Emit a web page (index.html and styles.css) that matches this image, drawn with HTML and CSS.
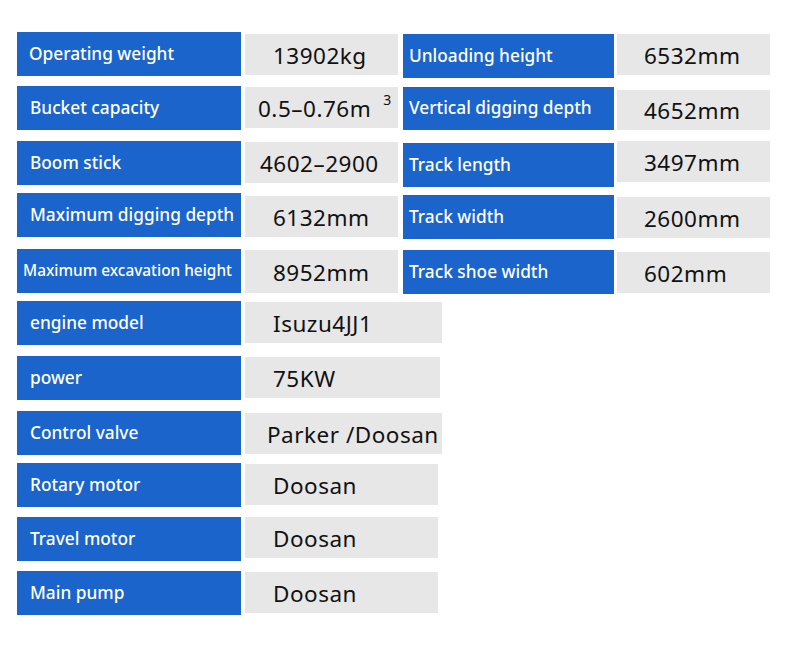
FILE: index.html
```html
<!DOCTYPE html>
<html lang="en">
<head>
<meta charset="utf-8">
<title>Specifications</title>
<link rel="stylesheet" href="styles.css">
</head>
<body>
<div class="sheet">
  <div class="row r1">
    <div class="lab l-ow">Operating weight</div>
    <div class="val v-c1 o2">13902kg</div>
    <div class="lab lab2 o2">Unloading height</div>
    <div class="val val2 o2">6532mm</div>
  </div>
  <div class="row r2">
    <div class="lab">Bucket capacity</div>
    <div class="val v-c1 v-bucket o1">0.5–0.76m<sup class="sup">3</sup></div>
    <div class="lab lab2 lab2-short o1">Vertical digging depth</div>
    <div class="val val2 o4 short">4652mm</div>
  </div>
  <div class="row r3">
    <div class="lab">Boom stick</div>
    <div class="val v-c1 v-boom o1">4602–2900</div>
    <div class="lab lab2 o2">Track length</div>
    <div class="val val2">3497mm</div>
  </div>
  <div class="row r4">
    <div class="lab">Maximum digging depth</div>
    <div class="val v-c1 o3">6132mm</div>
    <div class="lab lab2 o2">Track width</div>
    <div class="val val2 o4">2600mm</div>
  </div>
  <div class="row r5">
    <div class="lab lab-small">Maximum excavation height</div>
    <div class="val v-c1 o1 tall">8952mm</div>
    <div class="lab lab2 o1">Track shoe width</div>
    <div class="val val2 o3">602mm</div>
  </div>
  <div class="row r6">
    <div class="lab">engine model</div>
    <div class="val v-wide o1">Isuzu4JJ1</div>
  </div>
  <div class="row r7">
    <div class="lab">power</div>
    <div class="val v-mid o1">75KW</div>
  </div>
  <div class="row r8">
    <div class="lab">Control valve</div>
    <div class="val v-wide v-parker o2">Parker /Doosan</div>
  </div>
  <div class="row r9">
    <div class="lab">Rotary motor</div>
    <div class="val v-narrow o1">Doosan</div>
  </div>
  <div class="row r10">
    <div class="lab">Travel motor</div>
    <div class="val v-narrow">Doosan</div>
  </div>
  <div class="row r11">
    <div class="lab">Main pump</div>
    <div class="val v-narrow o1">Doosan</div>
  </div>
</div>
</body>
</html>
```

FILE: styles.css
```css
html, body {
  margin: 0;
  padding: 0;
  background: #ffffff;
}

body {
  width: 790px;
  height: 652px;
  overflow: hidden;
  font-family: "Noto Sans", "Open Sans", sans-serif;
}

.sheet {
  padding: 32px 0 0 17px;
}

.row {
  display: flex;
  align-items: flex-start;
  height: 44px;
}

.r2 { margin-top: 10px; }
.r3 { margin-top: 11px; }
.r4 { margin-top: 8px; }
.r5 { margin-top: 12px; }
.r6 { margin-top: 8px; }
.r7 { margin-top: 11px; }
.r8 { margin-top: 11px; }
.r9 { margin-top: 8px; }
.r10 { margin-top: 10px; }
.r11 { margin-top: 10px; }

.lab {
  box-sizing: border-box;
  width: 224px;
  height: 44px;
  flex: none;
  background: #1b64cb;
  color: #ffffff;
  font-size: 17.3px;
  font-weight: 500;
  line-height: 44px;
  padding-left: 13px;
  white-space: nowrap;
}

.l-ow { padding-left: 12px; }

.lab-small {
  font-size: 15.4px;
  padding-left: 6px;
}

.lab2 {
  width: 211px;
  margin-left: 5px;
  padding-left: 6px;
}

.lab2-short { height: 43px; line-height: 42px; }

.val {
  box-sizing: border-box;
  height: 41px;
  flex: none;
  background: #e7e7e7;
  color: #111111;
  font-size: 22.5px;
  letter-spacing: 0.5px;
  line-height: 41px;
  padding-top: 1px;
  padding-left: 28px;
  margin-left: 4px;
  white-space: nowrap;
}

.v-c1 { width: 153px; }
.tall { height: 43px; line-height: 43px; }
.v-bucket { padding-left: 13px; }
.v-boom { padding-left: 15px; }

.sup {
  font-size: 14px;
  vertical-align: top;
  position: relative;
  top: -9px;
  margin-left: 12px;
}

.val2 {
  width: 153px;
  margin-left: 3px;
  padding-left: 27px;
}

.short { height: 40px; line-height: 40px; }

.v-wide { width: 197px; }
.v-mid { width: 195px; }
.v-narrow { width: 193px; }
.v-parker { padding-left: 22px; }

.o1 { margin-top: 1px; }
.o2 { margin-top: 2px; }
.o3 { margin-top: 3px; }
.o4 { margin-top: 4px; }
```
